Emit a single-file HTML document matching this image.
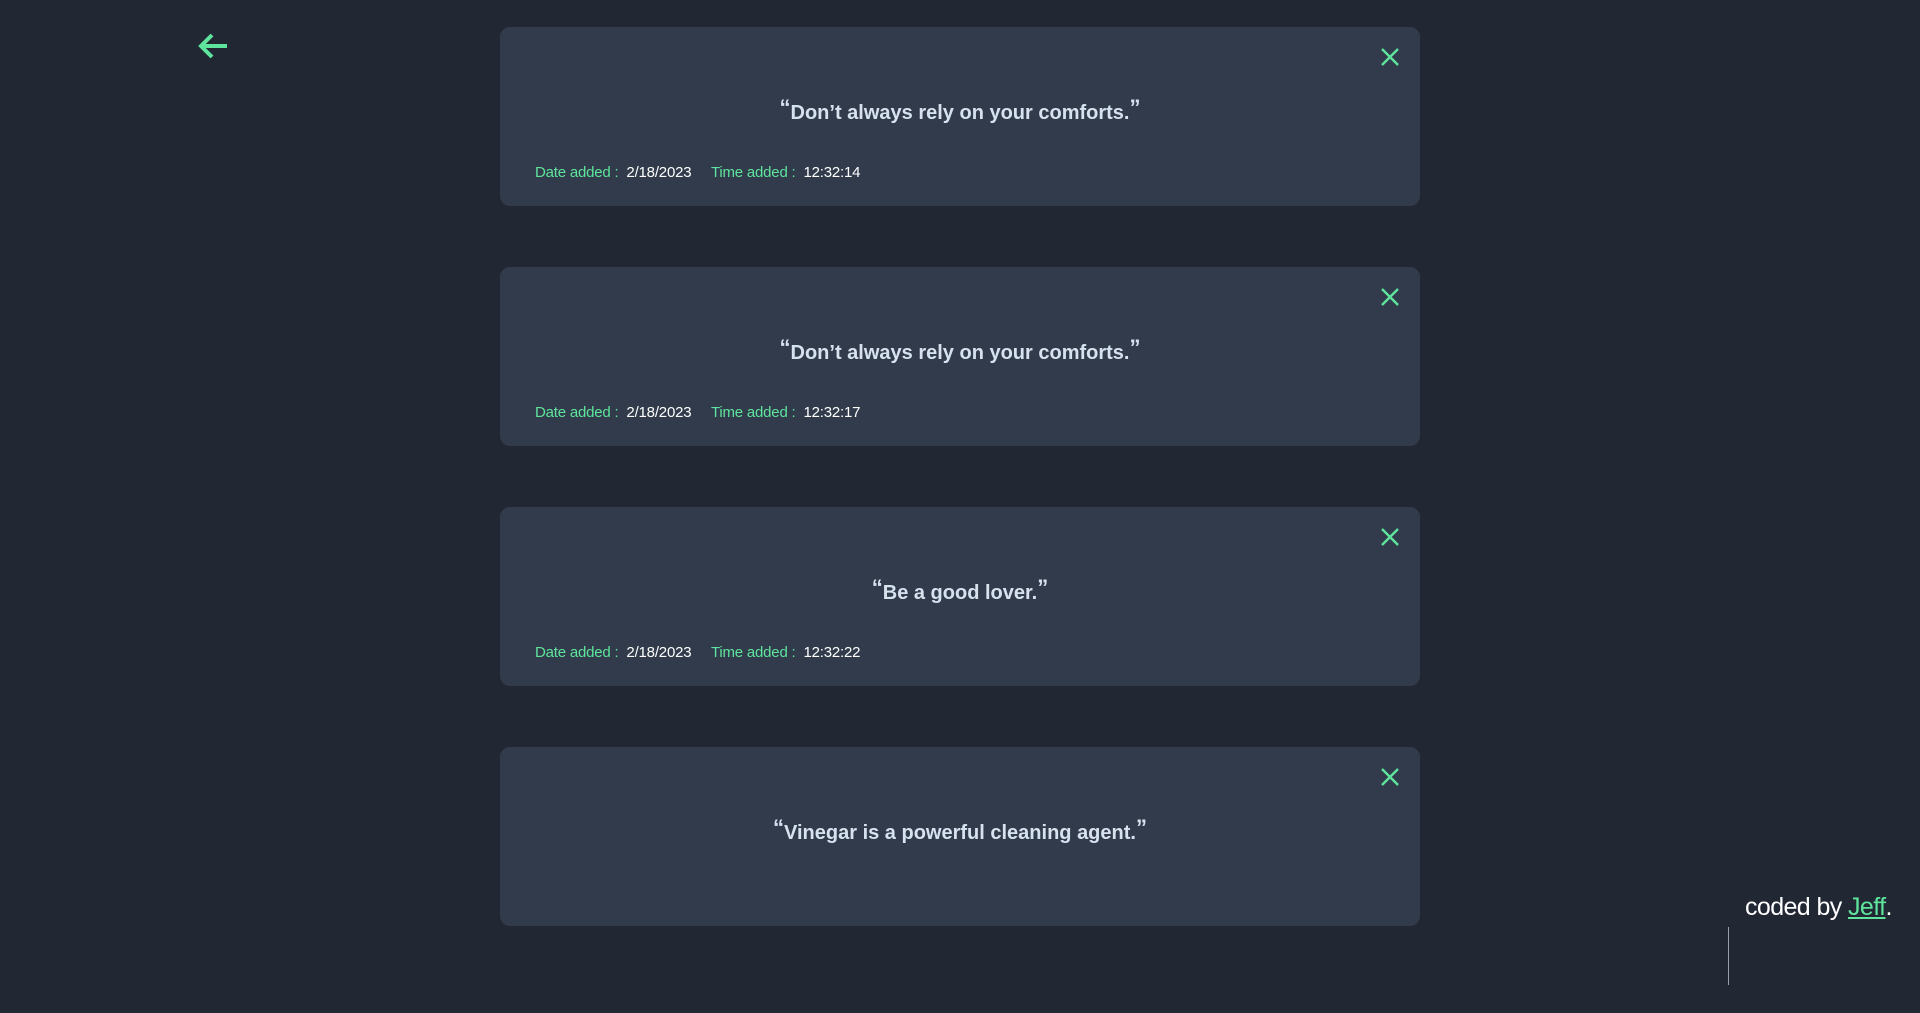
<!DOCTYPE html>
<html><head><style>
body{margin:0;width:1920px;height:1013px;background:#212733;font-family:"Liberation Sans",sans-serif;position:relative;overflow:hidden}
.card{position:absolute;left:500px;width:920px;height:179px;background:#313b4b;border-radius:10px}
.q{position:absolute;top:68px;left:0;right:0;text-align:center;color:#d6e2ee;font-size:20px;font-weight:bold;letter-spacing:0}
.q span{color:#d6e2ee;font-size:22px;vertical-align:4px}
.m{position:absolute;left:35px;top:137px;font-size:15px;letter-spacing:-0.2px;color:#fff}
.m b{font-weight:normal;color:#5ee49c}
.x{position:absolute;right:20px;top:20px}
</style></head><body>
<svg style="position:absolute;left:197px;top:32px" width="32" height="28" viewBox="0 0 32 28"><path d="M30 14H5M15 3L4 14l11 11" stroke="#5ee49c" stroke-width="4" fill="none"/></svg>

<div class="card" style="top:27px"><svg class="x" width="20" height="20"><path d="M2 2L18 18M18 2L2 18" stroke="#5ee49c" stroke-width="2.4"/></svg>
<div class="q"><span>“</span>Don’t always rely on your comforts.<span>”</span></div>
<div class="m"><b>Date added :</b>&nbsp; 2/18/2023 &nbsp;&nbsp;&nbsp; <b>Time added :</b>&nbsp; 12:32:14</div></div>

<div class="card" style="top:267px"><svg class="x" width="20" height="20"><path d="M2 2L18 18M18 2L2 18" stroke="#5ee49c" stroke-width="2.4"/></svg>
<div class="q"><span>“</span>Don’t always rely on your comforts.<span>”</span></div>
<div class="m"><b>Date added :</b>&nbsp; 2/18/2023 &nbsp;&nbsp;&nbsp; <b>Time added :</b>&nbsp; 12:32:17</div></div>

<div class="card" style="top:507px"><svg class="x" width="20" height="20"><path d="M2 2L18 18M18 2L2 18" stroke="#5ee49c" stroke-width="2.4"/></svg>
<div class="q"><span>“</span>Be a good lover.<span>”</span></div>
<div class="m"><b>Date added :</b>&nbsp; 2/18/2023 &nbsp;&nbsp;&nbsp; <b>Time added :</b>&nbsp; 12:32:22</div></div>

<div class="card" style="top:747px"><svg class="x" width="20" height="20"><path d="M2 2L18 18M18 2L2 18" stroke="#5ee49c" stroke-width="2.4"/></svg>
<div class="q"><span>“</span>Vinegar is a powerful cleaning agent.<span>”</span></div></div>

<div style="position:absolute;left:1745px;top:893px;font-size:25px;color:#fff;letter-spacing:-0.6px">coded by <span style="color:#5ee49c;text-decoration:underline">Jeff</span>.</div>
<div style="position:absolute;left:1728px;top:927px;width:1px;height:58px;background:#9aa0a8"></div>
</body></html>
